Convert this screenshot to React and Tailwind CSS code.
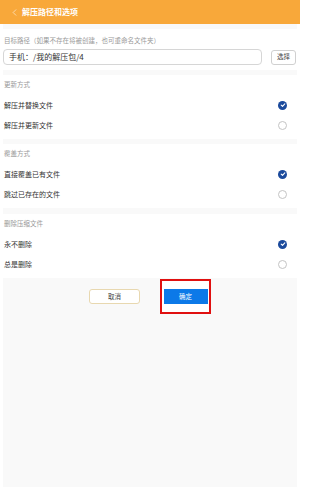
import { ChevronLeft } from 'lucide-react'

const sections = [
  { title: '更新方式', options: ['解压并替换文件', '解压并更新文件'], gap: 'mt-[5px]' },
  { title: '覆盖方式', options: ['直接覆盖已有文件', '跳过已存在的文件'], gap: 'mt-[5px]' },
  { title: '删除压缩文件', options: ['永不删除', '总是删除'], gap: 'mt-[6px]' },
]

function Radio({ checked }) {
  if (checked) {
    return (
      <span className="flex h-[9px] w-[9px] items-center justify-center rounded-full bg-[#1b4a9c]">
        <svg width="6" height="6" viewBox="0 0 10 10">
          <path d="M2 5.2 L4.2 7.2 L8 3" fill="none" stroke="#fff" strokeWidth="1.8" strokeLinecap="round" strokeLinejoin="round" />
        </svg>
      </span>
    )
  }
  return <span className="block h-[9px] w-[9px] rounded-full border border-[#c4c4c4] bg-white" />
}

export default function App() {
  return (
    <div
      className="flex h-[489px] w-[300px] flex-col overflow-hidden bg-white"
      style={{ fontFamily: '"Noto Sans CJK SC", "Noto Sans", sans-serif' }}
    >
      {/* Header */}
      <div className="flex h-[24px] shrink-0 items-center bg-[#f8a83a] pl-[9px]">
        <ChevronLeft size={11} strokeWidth={1.5} className="text-white/80" />
        <span className="ml-[2px] text-[8px] font-bold text-white">解压路径和选项</span>
      </div>

      <div className="mx-[3px] mb-[2px] flex flex-1 flex-col bg-[#f9f9f9] pt-[5px]">
        {/* Target path */}
        <div className="bg-white pb-[5px] pt-[6px]">
          <div className="pl-[1px] text-[6.5px] leading-[10px] text-[#9a9a9a]">
            目标路径（如果不存在将被创建，也可重命名文件夹）
          </div>
          <div className="mt-[4px] flex items-center">
            <div className="flex h-[16px] w-[259px] items-center rounded-[4px] border border-[#d6d6d6] pl-[5px] text-[8px] text-[#333]">
              手机：/我的解压包/4
            </div>
            <div className="ml-[9px] flex h-[15px] w-[25px] items-center justify-center rounded-[3px] border border-[#d0d0d0] text-[6.5px] text-[#444]">
              选择
            </div>
          </div>
        </div>

        {sections.map((s) => (
          <div key={s.title} className={`${s.gap} bg-white pb-[4px]`}>
            <div className="flex h-[20px] items-center pl-[1px] text-[6.5px] text-[#9a9a9a]">
              {s.title}
            </div>
            {s.options.map((o, j) => (
              <div key={o} className="flex h-[20px] items-center justify-between pl-[1px] pr-[10px]">
                <span className="text-[7px] text-[#333]">{o}</span>
                <Radio checked={j === 0} />
              </div>
            ))}
          </div>
        ))}

        {/* Buttons */}
        <div className="mt-[1px] flex items-start justify-center gap-[20px]">
          <button className="mt-[10px] flex h-[15px] w-[51px] items-center justify-center rounded-[3px] border border-[#e8d8b0] bg-white text-[6.5px] text-[#444]">
            取消
          </button>
          <div className="flex h-[35px] w-[51px] items-center justify-center border-2 border-[#e01010] bg-white">
            <div className="flex h-[15px] w-[44px] items-center justify-center bg-[#0c79e8] text-[6.5px] text-white">
              确定
            </div>
          </div>
        </div>
      </div>
    </div>
  )
}
